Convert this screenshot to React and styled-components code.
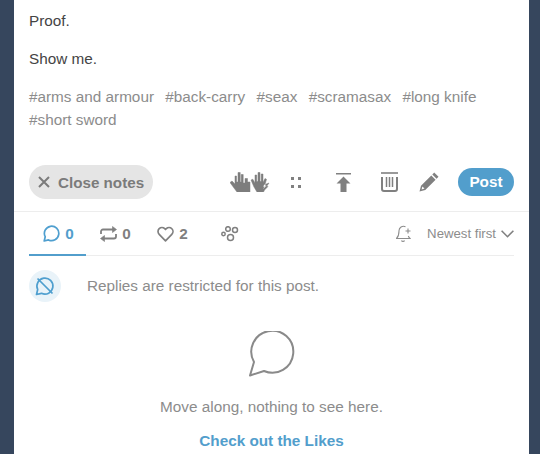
import React from "react";
import styled, { createGlobalStyle } from "styled-components";

const GlobalStyle = createGlobalStyle`
  html, body {
    margin: 0;
    padding: 0;
    height: 454px;
    overflow: hidden;
    background: #36465d;
    font-family: "Liberation Sans", Arial, sans-serif;
  }
`;

function HandsIcon() {
  return (
    <svg width="40" height="20" viewBox="0 0 40 20" fill="#7d7d7d" stroke="#7d7d7d" strokeWidth="0.500">
      <path d="M0 10.500l2-1.500 3 3V4h1.500v6H8V0.500h2.200V10h1V2.500h2V11H15V6.500h2.500V10H20v10H7l-3-4z" />
      <path d="M21 8l1.800-.8 2.200 3.800V3h1.700v6.500H28V0.500h2V9.500h1.200V2h1.800v8.500l2-4 1.500.8-1.500 5.200 4-1.500-2.500 3.500H38l-3.500 3.500-1 2H27l-3-5z" />
      <path d="M35.500 11.500l-2.500 3h1.500l-1.500 2.500 3.500-3.500h-1.500z" fill="#fff" stroke="none" />
    </svg>
  );
}

function DotsIcon() {
  return (
    <svg width="10" height="11" viewBox="0 0 10 11" fill="#808080">
      <rect x="0" y="0" width="3" height="3" />
      <rect x="7" y="0" width="3" height="3" />
      <rect x="0" y="8" width="3" height="3" />
      <rect x="7" y="8" width="3" height="3" />
    </svg>
  );
}

function TopIcon() {
  return (
    <svg width="15" height="19" viewBox="0 0 15 19" fill="#808080">
      <rect x="0" y="0" width="15" height="1.500" />
      <path d="M7.500 3.500l7 7H10.500V19h-6v-8.500H0.500z" />
    </svg>
  );
}

function TrashIcon() {
  return (
    <svg width="17" height="20" viewBox="0 0 17 20" fill="none" stroke="#808080">
      <path d="M0 1h17" strokeWidth="1.600" />
      <path d="M1 5v12a2 2 0 0 0 2 2h11a2 2 0 0 0 2-2V5" strokeWidth="2" />
      <path d="M5.500 5v10M8.500 5v10M11.500 5v10" strokeWidth="1.500" />
    </svg>
  );
}

function PencilIcon() {
  return (
    <svg width="20" height="20" viewBox="0 0 20 20" fill="#808080">
      <path d="M15.200 0.500l4.300 4.300-1.900 1.900-4.300-4.300z" />
      <path d="M12.300 3.400l4.300 4.300L6.300 18 0.500 19.500 2 13.700zM3.400 14.500l-.8 2.900 2.900-.8z" fillRule="evenodd" />
    </svg>
  );
}

function ReplyIcon() {
  return (
    <svg width="17" height="17" viewBox="0 0 17 17" fill="none" stroke="#4f9fcf" strokeWidth="1.700">
      <path d="M1.200 16l1-4.300A7.200 7.200 0 1 1 5.500 14.900z" strokeLinejoin="round" />
    </svg>
  );
}

function EmptyBubble() {
  return (
    <svg width="46" height="46" viewBox="0 0 46 46" fill="none" stroke="#8a8a8a" strokeWidth="2">
      <path d="M15 40A21 21 0 1 0 5 31L1 44.500z" strokeLinejoin="round" />
    </svg>
  );
}

function ReblogIcon() {
  return (
    <svg width="17" height="16" viewBox="0 0 17 16" fill="none" stroke="#808080" strokeWidth="1.800">
      <path d="M1 8V5.500a2 2 0 0 1 2-2h10" />
      <path d="M16 8v2.500a2 2 0 0 1-2 2H4" />
      <path d="M12.500 0.500l4 3-4 3z" fill="#808080" strokeWidth="0.600" />
      <path d="M4.500 9.500l-4 3 4 3z" fill="#808080" strokeWidth="0.600" />
    </svg>
  );
}

function HeartIcon() {
  return (
    <svg width="17" height="16" viewBox="0 0 17 16" fill="none" stroke="#808080" strokeWidth="1.700">
      <path d="M8.500 14.800L2.200 8.300a3.900 3.900 0 0 1 0-5.600 3.900 3.900 0 0 1 5.500 0l.8.800.8-.8a3.900 3.900 0 0 1 5.500 5.600z" strokeLinejoin="round" />
    </svg>
  );
}

function CommunityIcon() {
  return (
    <svg width="18" height="16" viewBox="0 0 18 16" fill="none" stroke="#808080" strokeWidth="1.500">
      <circle cx="7" cy="3" r="2.300" />
      <circle cx="14" cy="4" r="2.500" />
      <circle cx="2.500" cy="8" r="1.700" />
      <circle cx="9.500" cy="11.500" r="3" />
    </svg>
  );
}

function BellIcon() {
  return (
    <svg width="15" height="18" viewBox="0 0 15 18" fill="none" stroke="#8c8c8c" strokeWidth="1.100">
      <path d="M9.500 1.800A4.500 4.500 0 0 0 3 6c0 4-1 6-2.500 7.500h13.500c-.8-.7-1.300-1.500-1.700-2.500" />
      <path d="M5.500 15.500c.4 1.200 2.600 1.200 3 0" />
      <path d="M9.500 6h5M12 3.500v5" />
    </svg>
  );
}

function MutedReplyIcon() {
  return (
    <svg width="20" height="20" viewBox="0 0 20 20" fill="none" stroke="#4f9fcf" strokeWidth="1.700">
      <path d="M1.500 18.500l1.200-5A8 8 0 1 1 6.500 17.300z" strokeLinejoin="round" />
      <path d="M2.500 2.500l15 15" />
    </svg>
  );
}

function Chevron() {
  return (
    <svg width="13" height="8" viewBox="0 0 13 8" fill="none" stroke="#808080" strokeWidth="1.600">
      <path d="M0.600 0.800l5.900 5.900 5.900-5.900" />
    </svg>
  );
}

function CloseIcon() {
  return (
    <svg width="12" height="12" viewBox="0 0 12 12" fill="none" stroke="#7b7b7b" strokeWidth="2">
      <path d="M1 1l10 10M11 1L1 11" />
    </svg>
  );
}

const tags = ["arms and armour", "back-carry", "seax", "scramasax", "long knife", "short sword"];

export default function App() {
  return (
    <>
      <GlobalStyle />
      <Card>
        <Body>
          <Paragraph>Proof.</Paragraph>
          <Paragraph>Show me.</Paragraph>
          <Tags>
            {tags.map((t) => (
              <Tag key={t}>#{t}</Tag>
            ))}
          </Tags>
        </Body>
        <Footer>
          <NotesButton>
            <CloseIcon />
            Close notes
          </NotesButton>
          <Controls>
            <Control $w={40}><HandsIcon /></Control>
            <Control $w={52}><DotsIcon /></Control>
            <Control $w={43}><TopIcon /></Control>
            <Control $w={49}><TrashIcon /></Control>
            <Control $w={30}><PencilIcon /></Control>
            <PostButton>Post</PostButton>
          </Controls>
        </Footer>
        <Notes>
          <TabBar>
            <Tab $active>
              <ReplyIcon />
              <span>0</span>
            </Tab>
            <Tab>
              <ReblogIcon />
              <span>0</span>
            </Tab>
            <Tab>
              <HeartIcon />
              <span>2</span>
            </Tab>
            <Tab>
              <CommunityIcon />
            </Tab>
            <Sort>
              <BellIcon />
              <SortLabel>Newest first</SortLabel>
              <Chevron />
            </Sort>
          </TabBar>
          <Restricted>
            <Badge><MutedReplyIcon /></Badge>
            <RestrictedText>Replies are restricted for this post.</RestrictedText>
          </Restricted>
          <Empty>
            <EmptyBubble />
            <EmptyText>Move along, nothing to see here.</EmptyText>
            <LikesLink>Check out the Likes</LikesLink>
          </Empty>
        </Notes>
      </Card>
    </>
  );
}

const Card = styled.div`
  margin-left: 14px;
  width: 515px;
  height: 454px;
  overflow: hidden;
  background: #fff;
`;

const Body = styled.div`
  padding: 12px 15px 0;
  color: #444;
  font-size: 15.3px;
`;

const Paragraph = styled.p`
  margin: 0 0 21px;
  line-height: 17px;
`;

const Tags = styled.div`
  display: flex;
  flex-wrap: wrap;
  gap: 5px 11.3px;
  width: 470px;
`;

const Tag = styled.span`
  color: #8c8c8c;
  font-size: 15.3px;
  line-height: 18px;
`;

const Footer = styled.div`
  display: flex;
  align-items: center;
  justify-content: space-between;
  margin-top: 36px;
  padding: 0 15px 12px;
  border-bottom: 1px solid #ededed;
`;

const NotesButton = styled.div`
  display: flex;
  align-items: center;
  gap: 8px;
  box-sizing: border-box;
  width: 124px;
  height: 34px;
  padding-left: 9px;
  border-radius: 17px;
  background: #e5e5e5;
  color: #7b7b7b;
  font-size: 15.2px;
  font-weight: 700;
`;

const Controls = styled.div`
  display: flex;
  align-items: center;
`;

const Control = styled.div`
  display: flex;
  justify-content: center;
  width: ${(p) => p.$w}px;
`;

const PostButton = styled.div`
  display: flex;
  align-items: center;
  justify-content: center;
  width: 56px;
  height: 28px;
  margin-left: 14px;
  border-radius: 14px;
  background: #529ecc;
  color: #fff;
  font-size: 15.3px;
  font-weight: 700;
`;

const Notes = styled.div`
  padding: 0 15px;
`;

const TabBar = styled.div`
  display: flex;
  align-items: stretch;
  height: 43px;
  border-bottom: 1px solid #ededed;
`;

const Tab = styled.div`
  display: flex;
  align-items: center;
  justify-content: center;
  gap: 5px;
  box-sizing: border-box;
  width: 57px;
  margin-bottom: -1px;
  padding: 1px 0 0 2px;
  border-bottom: 2px solid ${(p) => (p.$active ? "#529ecc" : "transparent")};
  color: ${(p) => (p.$active ? "#529ecc" : "#808080")};
  font-size: 15.3px;
  font-weight: 700;
`;

const Sort = styled.div`
  display: flex;
  align-items: center;
  gap: 5px;
  margin-left: auto;
`;

const SortLabel = styled.span`
  margin-left: 11px;
  color: #8c8c8c;
  font-size: 13.2px;
`;

const Restricted = styled.div`
  display: flex;
  align-items: center;
  gap: 26px;
  margin-top: 14px;
`;

const Badge = styled.div`
  display: flex;
  align-items: center;
  justify-content: center;
  width: 32px;
  height: 32px;
  border-radius: 50%;
  background: #e9f3f9;
`;

const RestrictedText = styled.span`
  color: #8c8c8c;
  font-size: 15.3px;
`;

const Empty = styled.div`
  display: flex;
  flex-direction: column;
  align-items: center;
  margin-top: 29px;
`;

const EmptyText = styled.div`
  margin-top: 21px;
  color: #8c8c8c;
  font-size: 15.3px;
`;

const LikesLink = styled.div`
  margin-top: 16px;
  color: #529ecc;
  font-size: 15.3px;
  font-weight: 700;
`;
